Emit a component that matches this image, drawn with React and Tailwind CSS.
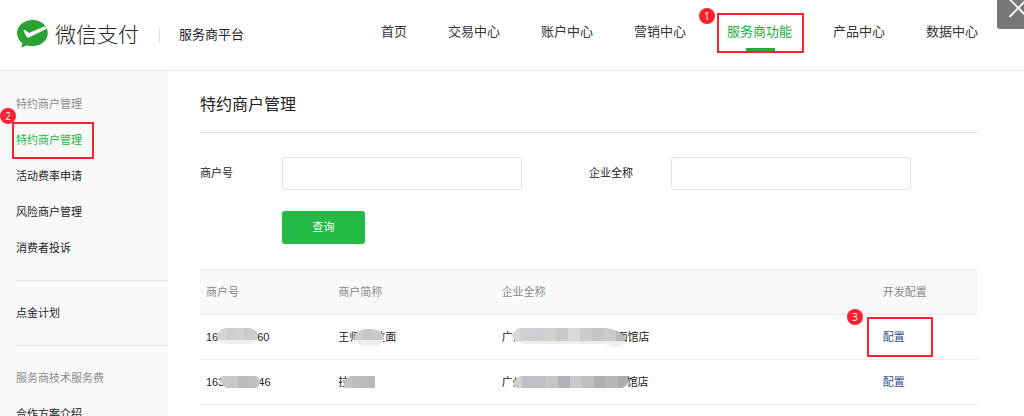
import { useState } from "react";

const FONT = "font-['Liberation_Sans','Noto_Sans_CJK_SC',sans-serif]";

const navItems = ["首页", "交易中心", "账户中心", "营销中心", "服务商功能", "产品中心", "数据中心"];

const menuGroups = [
  { title: "特约商户管理", items: ["特约商户管理", "活动费率申请", "风险商户管理", "消费者投诉"] },
  { items: ["点金计划"] },
  { title: "服务商技术服务费", items: ["合作方案介绍"] },
];

const blobs = {
  id1: {
    width: 41,
    shape: "M8 0H33Q41 2 41 8Q40 14 33 16H10Q1 15 0 9Q1 2 8 0Z",
    fade: 12,
    cells: ["#d6d6d6", "#cfcdcf", "#d3d2d2", "#cbcbcb", "#cdcdca"],
  },
  name1: {
    width: 30,
    shape: "M7 2Q15 0 23 2Q30 5 30 10Q29 18 22 18Q15 16 9 18Q1 16 0 10Q1 4 7 2Z",
    fade: 12,
    cells: ["#cfcfcf", "#c5c5c9", "#c9c8cb", "#cbcbcb"],
  },
  company1: {
    width: 113,
    shape: "M8 0H94Q112 3 113 11Q111 19 104 19Q96 16 90 16H12Q2 14 0 8Q2 1 8 0Z",
    fade: 13,
    cells: ["#d8d8d6", "#d0ced4", "#cfcdd2", "#d1d3cb", "#cbc5cc", "#dbd9de", "#cbcccc", "#c5c4c8", "#c9cbc9", "#b9b9b9"],
  },
  id2: {
    width: 40,
    shape: "M2 3H36Q40 5 40 9Q40 13 36 15H6Q1 11 0 7Z",
    cells: ["#cac8c9", "#c9c7c8", "#bdbcbc", "#bebdbf", "#c4c4c5"],
  },
  name2: {
    width: 32,
    shape: "M7 3H32V15H2Q0 12 1 9Q3 5 7 3Z",
    cells: ["#c3c3c1", "#bdbdbc", "#bababa", "#b8b8b7"],
  },
  company2: {
    width: 114,
    shape: "M6 3H114V9Q112 15 106 15H3Q0 14 0 10Q2 5 6 3Z",
    cells: ["#d0d0cd", "#c1bec5", "#c0bfc5", "#c3c8c0", "#b5b0b9", "#c9c8cb", "#bebebf", "#b0aeb1", "#b5b9b9", "#adadad"],
  },
};

// each merchant field is [visible start, mask key, visible end]
const merchants = [
  { id: ["16", "id1", "60"], name: ["王师", "name1", "拉面"], company: ["广东", "company1", "面馆店"] },
  { id: ["163", "id2", "46"], name: ["拉", "name2", ""], company: ["广州", "company2", "馆店"] },
];

// how far the mask slides over the text on either side
const overlap = {
  id1: "-ml-px -mr-px",
  name1: "-ml-1.5 -mr-2.5",
  company1: "-ml-3 -mr-2",
  id2: "-ml-1 -mr-0.5",
  name2: "-ml-1.5",
  company2: "-ml-2.5 -mr-px",
};

function Mask({ name }) {
  const { width, shape, fade, cells } = blobs[name];
  const size = width > 60 ? 12 : 9;

  return (
    <svg
      width={width}
      height="19"
      viewBox={`0 0 ${width} 19`}
      className={`relative shrink-0 ${overlap[name]}`}
      aria-hidden="true"
    >
      <clipPath id={name}>
        <path d={shape} />
      </clipPath>
      <g clipPath={`url(#${name})`}>
        {cells.map((fill, i) => (
          <rect key={i} x={i * size - (size === 12 ? 4 : 0)} y="0" width={size} height={fade || 19} fill={fill} shapeRendering="crispEdges" />
        ))}
        {fade && <rect x="0" y={fade} width={width} height="8" fill="#ededed" />}
      </g>
    </svg>
  );
}

function Masked({ value }) {
  const [start, mask, end] = value;

  return (
    <span className="flex items-center whitespace-nowrap">
      <span>{start}</span>
      <Mask name={mask} />
      <span>{end}</span>
    </span>
  );
}

// red frame with a numbered dot, drawn over the thing it points at
function Marker({ number, frame, dot }) {
  return (
    <>
      <span className={`pointer-events-none absolute border-2 border-[#f9222f] ${frame}`} />
      <span
        className={`pointer-events-none absolute flex size-4 items-center justify-center rounded-full bg-[#f9222f] font-['Open_Sans',sans-serif] text-[10px] leading-4 text-white ${dot}`}
      >
        {number}
      </span>
    </>
  );
}

function Logo() {
  return (
    <svg width="32" height="30" viewBox="0 0 32 30" aria-hidden="true">
      <path
        d="M16.500 0C8 0 1 5.700 1 13C1 17.200 3 20.800 6.300 23.300L5.500 27.800L10.700 25.200C12.500 25.800 14.400 26.100 16.500 26.100C25 26.100 31.800 20.400 31.800 13C31.800 5.700 25 0 16.500 0Z"
        fill="#2aa232"
      />
      <path
        d="M7.700 10.200Q8.600 9.500 9.500 10.300L12.300 12.500Q13.200 13.100 14.200 12.600L28.700 6.200L30.600 8.700L13 17.600Q11.400 18.300 10.600 16.800L7.600 11.300Q7.300 10.600 7.700 10.200Z"
        fill="#fff"
      />
    </svg>
  );
}

function Header() {
  return (
    <header className="flex h-[71px] shrink-0 items-center border-b border-[#e7e7eb] bg-white pl-4 pr-[46px]">
      <a href="#" className="flex items-center gap-[7px] text-[21px] font-light text-[#222]">
        <Logo />
        微信支付
      </a>
      <span className="ml-5 h-3.5 w-px bg-[#e0e0e0]" />
      <span className="ml-[19px] whitespace-nowrap text-[13px] text-[#222]">服务商平台</span>

      <nav className="-mt-1.5 ml-auto flex gap-[41px] text-[13px]">
        {navItems.map(item => {
          const active = item == "服务商功能";
          return (
            <a
              key={item}
              href="#"
              className={`relative whitespace-nowrap leading-5 ${active ? "text-[#22ac38]" : "text-[#333]"}`}
            >
              {item}
              {active && (
                <>
                  <span className="absolute left-[19px] top-[26px] h-[3px] w-[29px] bg-[#22ac38]" />
                  <Marker number="1" frame="-left-2.5 -right-3 -top-[9px] h-10" dot="-left-7 -top-3.5" />
                </>
              )}
            </a>
          );
        })}
      </nav>
    </header>
  );
}

function Sidebar() {
  return (
    <aside className="w-[168px] shrink-0 bg-[#f9f9f9] pl-4 pt-px text-[11px] leading-9">
      {menuGroups.map((group, i) => (
        <div key={i} className="border-b border-[#e2e2e2] py-3.5 last:border-b-0">
          {group.title && <h2 className="text-[#8a8a8a]">{group.title}</h2>}
          <ul>
            {group.items.map(item => {
              const active = item == "特约商户管理";
              return (
                <li key={item} className="relative">
                  <a href="#" className={active ? "text-[#22b83e]" : "text-[#222]"}>{item}</a>
                  {active && <Marker number="2" frame="-left-1 right-[74px] top-0 h-[37px]" dot="-left-4 -top-3.5" />}
                </li>
              );
            })}
          </ul>
        </div>
      ))}
    </aside>
  );
}

function SearchForm() {
  const [merchantId, setMerchantId] = useState("");
  const [company, setCompany] = useState("");

  const inputStyle = "h-[33px] w-60 min-w-0 rounded-[3px] border border-[#e2e2e2] bg-white px-2 outline-none focus:border-[#22b83e]";

  return (
    <form className="mt-6 text-[11px] text-[#222]" onSubmit={e => e.preventDefault()}>
      <div className="grid grid-cols-2">
        <div className="flex items-center">
          <label htmlFor="merchant-id" className="w-[82px] shrink-0">商户号</label>
          <input id="merchant-id" type="text" value={merchantId} className={inputStyle} onChange={e => setMerchantId(e.target.value)} />
        </div>
        <div className="flex items-center">
          <label htmlFor="company" className="w-[82px] shrink-0">企业全称</label>
          <input id="company" type="text" value={company} className={inputStyle} onChange={e => setCompany(e.target.value)} />
        </div>
      </div>
      <button type="submit" className="ml-[82px] mt-[21px] block h-[33px] w-[83px] rounded-[3px] bg-[#25b945] text-white">
        查询
      </button>
    </form>
  );
}

function MerchantTable() {
  return (
    <table className="mt-[25px] w-full table-fixed border-collapse text-left text-[11px] text-[#222]">
      <colgroup>
        <col className="w-[17%]" />
        <col className="w-[21%]" />
        <col className="w-[49%]" />
        <col className="w-[13%]" />
      </colgroup>
      <thead>
        <tr className="h-[45px] border-y border-[#ebebeb] bg-[#f9f9f9] text-[#8a8a8a]">
          <th className="pl-1.5 font-normal">商户号</th>
          <th className="pl-1.5 font-normal">商户简称</th>
          <th className="pl-1.5 font-normal">企业全称</th>
          <th className="pl-1.5 font-normal">开发配置</th>
        </tr>
      </thead>
      <tbody>
        {merchants.map((m, i) => (
          <tr key={i} className="h-[45px] border-b border-[#ebebeb]">
            <td className="pl-1.5"><Masked value={m.id} /></td>
            <td className="pl-1.5"><Masked value={m.name} /></td>
            <td className="pl-1.5"><Masked value={m.company} /></td>
            <td className="pl-1.5">
              <span className="relative">
                <a href="#" className="text-[#35508f]">配置</a>
                {i == 0 && <Marker number="3" frame="-left-4 -top-3.5 h-10 w-[66px]" dot="-left-9 -top-[22px]" />}
              </span>
            </td>
          </tr>
        ))}
      </tbody>
    </table>
  );
}

export default function App() {
  return (
    <div className={`flex h-screen flex-col overflow-hidden bg-white ${FONT}`}>
      <Header />

      <div className="flex flex-1 overflow-y-auto [scrollbar-width:none]">
        <Sidebar />
        <main className="min-w-0 flex-1 pl-8 pr-[46px]">
          <h1 className="border-b border-[#e2e2e2] pb-[15px] pt-[22px] text-base leading-6 text-[#222]">特约商户管理</h1>
          <SearchForm />
          <MerchantTable />
        </main>
      </div>

      <button type="button" aria-label="Close" className="absolute right-0 top-0 h-[29px] w-[27px] overflow-hidden rounded-bl-[3px] bg-[#777]">
        <svg width="27" height="29" viewBox="0 0 27 29" fill="none" stroke="#fff" strokeWidth="1.800">
          <path d="M12.500 -1L30 17M12.500 17L30 -1" />
        </svg>
      </button>
    </div>
  );
}
